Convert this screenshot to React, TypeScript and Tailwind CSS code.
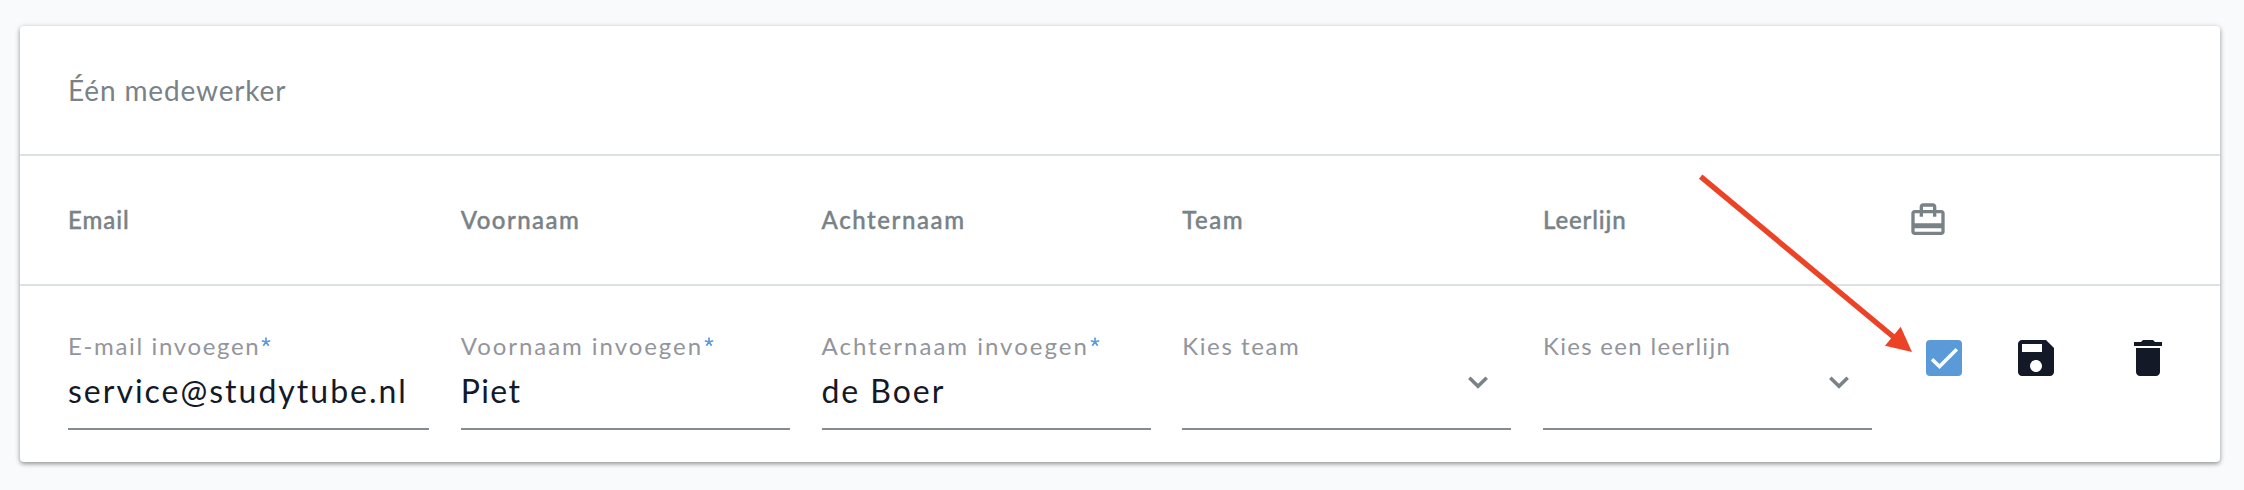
import React from 'react';
import clsx from 'clsx';

const columns = [
  { title: 'Email', titleClass: 'tracking-[0.95px]' },
  { title: 'Voornaam', titleClass: 'tracking-[1.45px]' },
  { title: 'Achternaam', titleClass: 'tracking-[1.6px]' },
  { title: 'Team', titleClass: 'tracking-[1.5px]' },
  { title: 'Leerlijn', titleClass: 'tracking-[0.85px]' },
];

const fields = [
  { label: 'E-mail invoegen', labelClass: 'tracking-[1.65px]', value: 'service@studytube.nl', valueClass: 'tracking-[2px]', required: true },
  { label: 'Voornaam invoegen', labelClass: 'tracking-[1.95px]', value: 'Piet', valueClass: 'tracking-[1.4px]', required: true },
  { label: 'Achternaam invoegen', labelClass: 'tracking-[2px]', value: 'de Boer', valueClass: 'tracking-[1.95px]', required: true },
  { label: 'Kies team', labelClass: 'tracking-[1.6px]', select: true },
  { label: 'Kies een leerlijn', labelClass: 'tracking-[1.3px]', select: true },
];

type FieldProps = {
  label: string;
  labelClass: string;
  value?: string;
  valueClass?: string;
  required?: boolean;
  select?: boolean;
};

const Field = ({ label, labelClass, value, valueClass, required, select }: FieldProps) => (
  <div className="mt-[42px] h-[102px] border-b-2 border-[#868a91]">
    <div className="flex h-9 items-center text-2xl whitespace-nowrap text-[#93959d]">
      <span className={labelClass}>{label}</span>
      {required && (
        <svg className="mb-2 ml-px h-[10px] w-[10px]" viewBox="0 0 10 10" fill="none" stroke="#5a9ad9" strokeWidth="1.7">
          <path d="M5 5V.5M5 5L.8 3.7M5 5l4.2-1.3M5 5L2.3 8.7M5 5l2.7 3.7" />
        </svg>
      )}
    </div>
    {value && (
      <div className={clsx('mt-[7px] h-10 text-[32px] leading-10 whitespace-nowrap text-[#131927]', valueClass)}>{value}</div>
    )}
    {select && (
      <div className="mt-[11px] mr-[23px] flex justify-end">
        <svg className="h-5 w-5" viewBox="0 0 20 20" fill="none" stroke="#788287" strokeWidth="3.6">
          <path d="M1.3 2.8l8.7 8.4 8.7-8.4" />
        </svg>
      </div>
    )}
  </div>
);

const App = () => {
  return (
    <div className="h-[490px] bg-[#f9fafc] px-5 pt-[26px] pr-6 font-['Lato',sans-serif]">
      <div className="relative h-[436px] rounded-[4px] bg-white shadow-[0_2px_4px_rgba(0,0,0,0.32),0_1px_6px_rgba(0,0,0,0.14)]">
        {/* Title */}
        <div className="flex h-[130px] items-center border-b-2 border-[#dce1e1] pl-12">
          <h2 className="text-[28px] tracking-[0.85px] text-[#788287]">Één medewerker</h2>
        </div>

        {/* Column names */}
        <div className="grid h-[130px] grid-cols-[361px_repeat(4,329px)_1fr] items-center gap-x-[31.75px] border-b-2 border-[#dce1e1] pl-12 text-2xl font-medium text-[#788287]">
          {columns.map((column) => (
            <span key={column.title} className={clsx('[-webkit-text-stroke:0.4px_#788287]', column.titleClass)}>{column.title}</span>
          ))}
          <svg className="ml-1 h-10 w-10" viewBox="0 0 24 24" fill="currentColor">
            <path d="M20 6h-3V4c0-1.11-.89-2-2-2H9c-1.11 0-2 .89-2 2v2H4c-1.11 0-2 .89-2 2v11c0 1.11.89 2 2 2h16c1.11 0 2-.89 2-2V8c0-1.11-.89-2-2-2zM9 4h6v2H9V4zm11 15H4v-2h16v2zm0-5H4V8h3v2h2V8h6v2h2V8h3v6z" />
          </svg>
        </div>

        {/* Employee */}
        <div className="grid h-[176px] grid-cols-[361px_repeat(4,329px)_1fr] items-start gap-x-[31.75px] pl-12">
          {fields.map((field) => (
            <Field key={field.label} {...field} />
          ))}
          <div className="mt-12 ml-[22.25px] flex h-12 items-center text-[#131927]">
            <div className="h-9 w-9 rounded-[4px] bg-[#5a9ad9]">
              <svg className="h-9 w-9" viewBox="0 0 36 36" fill="none" stroke="white" strokeWidth="3.5">
                <path d="M6 19.2l7.5 7.4L30.8 9.3" />
              </svg>
            </div>
            <svg className="ml-[50px] h-12 w-12" viewBox="0 0 24 24" fill="currentColor">
              <path d="M17 3H5c-1.11 0-2 .9-2 2v14c0 1.1.89 2 2 2h14c1.1 0 2-.9 2-2V7l-4-4zm-5 16c-1.66 0-3-1.34-3-3s1.34-3 3-3 3 1.34 3 3-1.34 3-3 3zm3-10H5V5h10v4z" />
            </svg>
            <svg className="ml-16 h-12 w-12" viewBox="0 0 24 24" fill="currentColor">
              <path d="M6 19c0 1.1.9 2 2 2h8c1.1 0 2-.9 2-2V7H6v12zM19 4h-3.5l-1-1h-5l-1 1H5v2h14V4z" />
            </svg>
          </div>
        </div>

        {/* Pointer to the checkbox */}
        <svg className="absolute top-[146px] left-[1676px] h-[184px] w-[220px]" viewBox="0 0 220 184">
          <path d="M4.7 4.7L200 167" stroke="#ec4326" strokeWidth="5.4" />
          <path d="M216 180l-27-6.3 15.7-19z" fill="#ec4326" />
        </svg>
      </div>
    </div>
  );
};

export default App;
